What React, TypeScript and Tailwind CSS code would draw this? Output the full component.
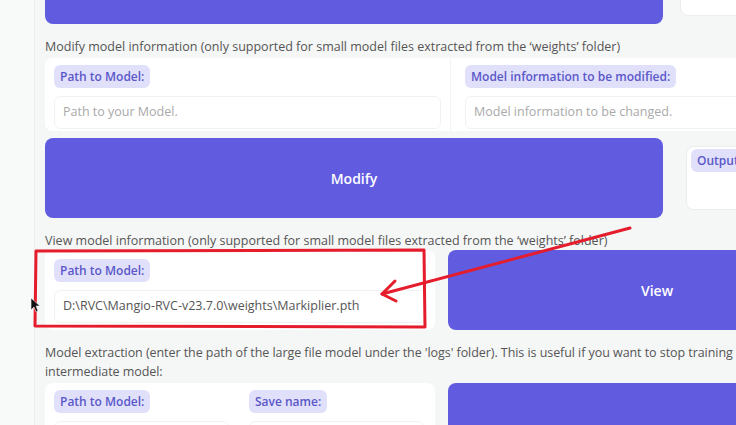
import React from "react";

const font = { fontFamily: '"Open Sans", "Liberation Sans", sans-serif' };

const Badge = ({ children }: { children: React.ReactNode }) => (
  <span className="inline-flex h-[23px] items-center rounded-md bg-[#e1e0fb] px-[6px] text-[12px] font-semibold text-[#5a58c9]">
    {children}
  </span>
);

const Field = ({
  label,
  value,
  placeholder,
  className,
}: {
  label: string;
  value?: string;
  placeholder?: string;
  className?: string;
}) => (
  <div className={"flex flex-col gap-[8px] bg-white pt-[7px] pb-[2px] " + (className ?? "")}>
    <div>
      <Badge>{label}</Badge>
    </div>
    <div className="flex h-[33px] items-center rounded-md border border-[#f0f2f2] bg-white px-[8px] text-[12.5px]">
      {value ? (
        <span className="text-[#555]">{value}</span>
      ) : (
        <span className="text-[#a9a9a9]">{placeholder}</span>
      )}
    </div>
  </div>
);

const PurpleButton = ({ label, className }: { label?: string; className: string }) => (
  <div
    className={
      "flex items-center justify-center rounded-lg bg-[#605bdf] text-[14px] font-semibold text-white " +
      className
    }
  >
    {label}
  </div>
);

export default function App() {
  return (
    <div style={font} className="relative flex h-[425px] w-[736px] overflow-hidden bg-[#f5f7f7]">
      <aside className="w-[35px] shrink-0 border-r border-[#eceeee] bg-[#f8f9f9]" />
      <main className="flex w-[900px] shrink-0 flex-col pl-[10px] text-[12.5px] text-[#555]">
        {/* top row */}
        <div className="mt-[-20px] flex gap-[17px]">
          <PurpleButton className="h-[44px] w-[618px]" />
          <div className="h-[36px] w-[80px] rounded-lg border border-[#eceeee] bg-white" />
        </div>

        <p className="mt-[15px] leading-[16px]">
          Modify model information (only supported for small model files extracted from the ‘weights’ folder)
        </p>

        <div className="mt-[3px] flex w-[740px] rounded-lg bg-white">
          <Field label="Path to Model:" placeholder="Path to your Model." className="w-[405px] rounded-lg px-[9px]" />
          <Field
            label="Model information to be modified:"
            placeholder="Model information to be changed."
            className="w-[320px] border-l border-[#f2f3f3] pl-[14px] pr-[9px]"
          />
        </div>

        {/* modify */}
        <div className="mt-[7px] flex gap-[23px]">
          <PurpleButton label="Modify" className="h-[80px] w-[618px]" />
          <div className="mt-[8px] h-[64px] w-[100px] rounded-lg border border-[#eceeee] bg-white px-[4px] pt-[2px]">
            <Badge>Output</Badge>
          </div>
        </div>

        <p className="mt-[15px] leading-[16px]">
          View model information (only supported for small model files extracted from the ‘weights’ folder)
        </p>

        <div className="mt-[1px] flex gap-[13px]">
          <Field
            label="Path to Model:"
            value="D:\RVC\Mangio-RVC-v23.7.0\weights\Markiplier.pth"
            className="h-[80px] w-[390px] rounded-lg px-[9px] !pt-[9px]"
          />
          <PurpleButton label="View" className="h-[80px] w-[418px]" />
        </div>

        <p className="mt-[13px] whitespace-nowrap leading-[19px] tracking-[-0.06px]">
          Model extraction (enter the path of the large file model under the 'logs' folder). This is useful if you want to stop training
          <br />
          intermediate model:
        </p>

        <div className="mt-[2px] flex gap-[13px]">
          <div className="flex h-[80px] w-[390px] gap-[20px] rounded-lg bg-white px-[9px] pt-[7px]">
            <div className="flex w-[175px] flex-col gap-[8px]">
              <div>
                <Badge>Path to Model:</Badge>
              </div>
              <div className="h-[33px] rounded-md border border-[#f0f2f2]" />
            </div>
            <div className="flex w-[175px] flex-col gap-[8px]">
              <div>
                <Badge>Save name:</Badge>
              </div>
              <div className="h-[33px] rounded-md border border-[#f0f2f2]" />
            </div>
          </div>
          <PurpleButton className="h-[80px] w-[418px]" />
        </div>
      </main>

      {/* annotation overlay */}
      <svg className="pointer-events-none absolute left-0 top-0" width="736" height="425" viewBox="0 0 736 425">
        <g fill="none" stroke="#e51c2c" strokeWidth="3" strokeLinecap="round" strokeLinejoin="round">
          <path d="M36 251 L424 250 L425 327 L35 326 Z" />
          <path d="M630 228 L382 294" />
          <path d="M395 281 L382 294 L396 301" />
        </g>
        <path d="M31 298 L31 310 L34 307 L36 312 L38 311 L36 306 L40 306 Z" fill="#111" stroke="#fff" strokeWidth="0.6" />
      </svg>
    </div>
  );
}
